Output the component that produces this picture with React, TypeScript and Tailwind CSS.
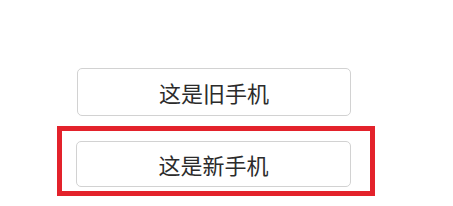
export default function App() {
  return (
    <div className="w-[453px] h-[206px] bg-white pl-[57px] pt-[68px] flex flex-col items-start font-['Noto_Sans_CJK_SC',sans-serif]">
      <button className="ml-[20px] w-[274px] h-[48px] rounded-[5px] border border-[#d2d2d2] bg-white text-[22px] leading-none text-[#2b2b2b] flex items-center justify-center">
        这是旧手机
      </button>
      <div className="mt-[10px] w-[318px] h-[70px] border-[5px] border-[#e3222b] pt-[10px] pl-[14px]">
        <button className="w-[275px] h-[46px] rounded-[5px] border border-[#d2d2d2] bg-white text-[22px] leading-none text-[#2b2b2b] flex items-center justify-center">
          这是新手机
        </button>
      </div>
    </div>
  );
}
